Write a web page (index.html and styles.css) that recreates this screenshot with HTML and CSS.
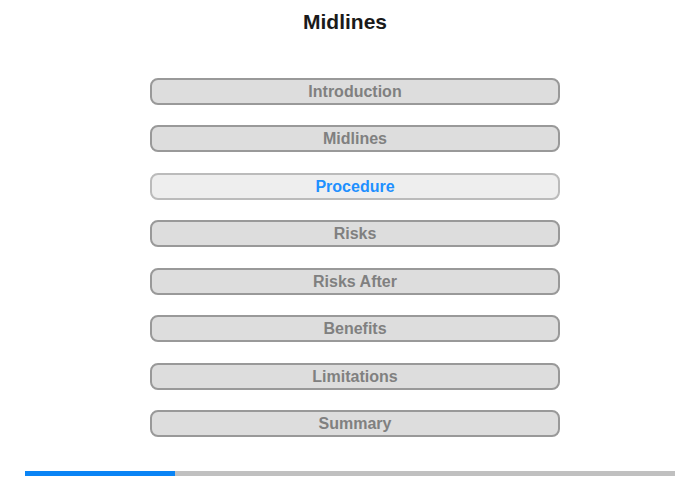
FILE: index.html
```html
<!DOCTYPE html>
<html>
<head>
<meta charset="utf-8">
<link rel="stylesheet" href="styles.css">
</head>
<body>
<div class="page">
  <h1 class="title">Midlines</h1>
  <nav class="menu">
    <div class="item">Introduction</div>
    <div class="item">Midlines</div>
    <div class="item active">Procedure</div>
    <div class="item">Risks</div>
    <div class="item">Risks After</div>
    <div class="item">Benefits</div>
    <div class="item">Limitations</div>
    <div class="item">Summary</div>
  </nav>
  <div class="progress"><div class="progress-fill" style="width:150px"></div></div>
</div>
</body>
</html>
```
FILE: styles.css
```css
html, body {
  margin: 0;
  padding: 0;
  background: #fff;
}
.page {
  width: 700px;
  height: 480px;
  font-family: "Liberation Sans", Arial, sans-serif;
  display: flex;
  flex-direction: column;
}
.title {
  margin: 10px 10px 0 0;
  font-size: 21px;
  line-height: 24px;
  font-weight: bold;
  color: #1a1a1a;
  text-align: center;
}
.menu {
  margin: 44px 0 0 150px;
  width: 410px;
  display: flex;
  flex-direction: column;
  gap: 20.45px;
}
.item {
  box-sizing: border-box;
  height: 27px;
  border: 2px solid #999;
  border-radius: 8px;
  background: #ddd;
  color: #808080;
  font-size: 16px;
  font-weight: bold;
  line-height: 23px;
  text-align: center;
}
.item.active {
  background: #eee;
  border-color: #bbb;
  color: #1e90ff;
}
.progress {
  margin: 34px 0 0 25px;
  width: 650px;
  height: 5px;
  background: #c0c0c0;
}
.progress-fill {
  height: 100%;
  background: #0a84f5;
}
```
